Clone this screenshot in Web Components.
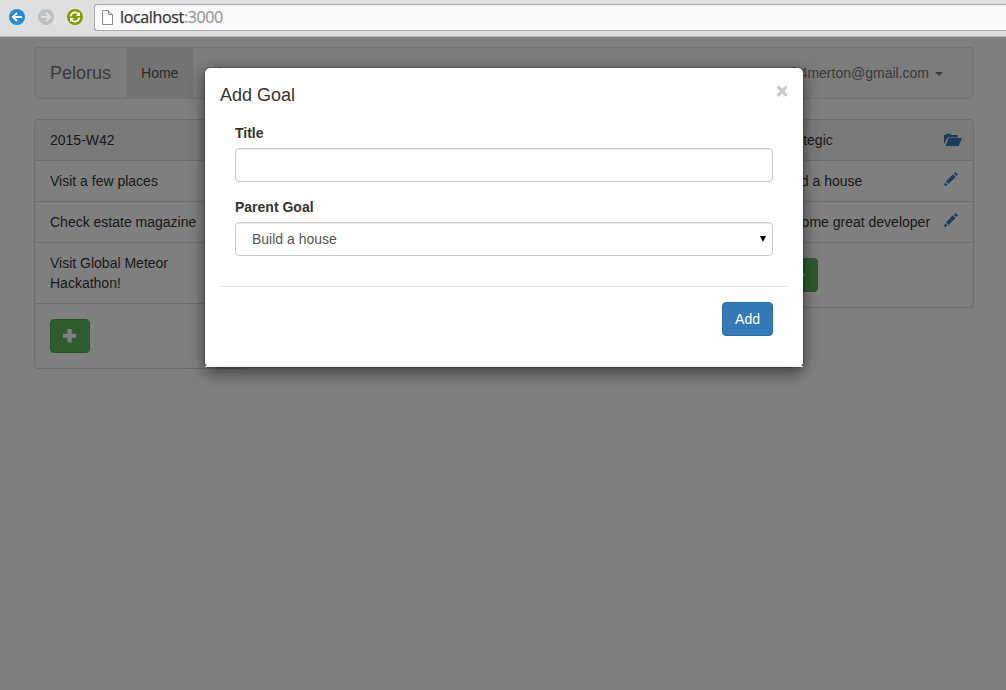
<!DOCTYPE html>
<html lang="en">
<head>
<meta charset="utf-8">
<title>Pelorus</title>
<style>
    html, body { margin: 0; height: 100%; overflow: hidden; background: #fff; }
    body {
        font: 14px/20px "Liberation Sans", Arial, sans-serif;
        color: #333;
    }
</style>
</head>
<body>
<pelorus-app></pelorus-app>

<script>
class GlyphIcon extends HTMLElement {
    constructor() {
        super();
        this.attachShadow({ mode: 'open' });
    }

    _getShape() {
        switch (this.getAttribute('name')) {
            case 'plus':
                return '<path d="M4.8 0h3.6q.4 0 .4.4V4.7h4q.4 0 .4.4v3.3q0 .4-.4.4h-4v4.2q0 .4-.4.4H4.8q-.4 0-.4-.4V8.8h-4Q0 8.800 0 8.400V5.100q0-.4.4-.4h4V.4q0-.4.4-.4z"/>';
            case 'pencil':
                return '<path d="M0 14l1.100-3.700 2.600 2.600zM1.900 9.500l7.200-7.200 2.600 2.600-7.200 7.200zM10 1.400l.9-.9q.6-.6 1.200 0l1.400 1.400q.6.6 0 1.200l-.9.9z"/>';
            case 'folder':
                return '<path d="M0 11.5V2h1.5l.7-1.2h4.6L7.500 2h6.300v2.400H4.400q-1 0-1.400.9zM1.600 13L4.200 5.700q.2-.6.9-.6H18l-3 7.400q-.2.5-.8.5z"/>';
        }
        return '';
    }

    connectedCallback() {
        const width = this.getAttribute('width') || 14;
        this.shadowRoot.innerHTML = `
            <style>
                :host { display: inline-block; width: ${width}px; height: 14px; line-height: 0; }
                svg { fill: currentColor; }
            </style>
            <svg width="${width}" height="14" viewBox="0 0 ${width} 14">${this._getShape()}</svg>
        `;
    }
}

class BrowserBar extends HTMLElement {
    constructor() {
        super();
        this.attachShadow({ mode: 'open' });
    }

    connectedCallback() {
        this.shadowRoot.innerHTML = `
            <style>
                :host {
                    display: flex;
                    box-sizing: border-box;
                    height: 37px;
                    padding: 4px 0 6px 9px;
                    background: #dfdfdf;
                    border-bottom: 1px solid #b3b3b3;
                    overflow: hidden;
                }
                .buttons { display: flex; gap: 13px; padding-top: 5px; width: 85px; flex: none; }
                .buttons svg { width: 16px; height: 16px; flex: none; }
                .address {
                    flex: 1;
                    display: flex;
                    box-sizing: border-box;
                    height: 27px;
                    padding: 5px 0 0 7px;
                    background: linear-gradient(#f2f2f2, #fafafa 4px);
                    border: 1px solid #aaa;
                    border-right: 0;
                    border-radius: 3px 0 0 3px;
                }
                .address svg { flex: none; margin-right: 6px; }
                .url {
                    margin-top: -3px;
                    font: 16px/20px "Open Sans", sans-serif;
                    letter-spacing: -0.35px;
                    -webkit-text-stroke: 0.25px;
                    color: #333;
                }
                .url span { color: #999; }
            </style>
            <div class="buttons">
                <svg viewBox="0 0 16 16">
                    <circle cx="8" cy="8" r="8" fill="#268bd2"/>
                    <path d="M13 8H4.5M8 4L4 8l4 4" fill="none" stroke="#fff" stroke-width="2"/>
                </svg>
                <svg viewBox="0 0 16 16">
                    <circle cx="8" cy="8" r="8" fill="#bdbfc0"/>
                    <path d="M3 8h8.5M8 4l4 4-4 4" fill="none" stroke="#e0e0e0" stroke-width="2"/>
                </svg>
                <svg viewBox="0 0 16 16">
                    <circle cx="8" cy="8" r="8" fill="#859900"/>
                    <path d="M3.7 7.3A4.4 4.4 0 0 1 11.4 5M12.3 8.7A4.4 4.4 0 0 1 4.6 11" fill="none" stroke="#fff" stroke-width="1.8"/>
                    <path d="M13 3v4H9zM3 13V9h4z" fill="#fff"/>
                </svg>
            </div>
            <div class="address">
                <svg width="12" height="16" viewBox="0 0 12 16">
                    <path d="M.5.5h6l4 4v10H.5z" fill="#fdfdfd" stroke="#8b8b8b"/>
                    <path d="M6.5.5v4h4" fill="#ddd" stroke="#8b8b8b"/>
                </svg>
                <div class="url">localhost<span>:3000</span></div>
            </div>
        `;
    }
}

class NavBar extends HTMLElement {
    constructor() {
        super();
        this.attachShadow({ mode: 'open' });
    }

    connectedCallback() {
        this.shadowRoot.innerHTML = `
            <style>
                :host {
                    display: flex;
                    height: 50px;
                    margin-bottom: 20px;
                    border: 1px solid #e7e7e7;
                    border-radius: 4px;
                    background: #f8f8f8;
                    color: #777;
                }
                .brand { padding: 15px; font-size: 18px; }
                .link { padding: 15px; }
                .active { background: #e7e7e7; color: #555; }
                .user {
                    display: flex;
                    align-items: center;
                    gap: 6px;
                    margin-left: auto;
                    padding-right: 30px;
                }
                .caret {
                    margin-top: 1px;
                    border-top: 4px solid;
                    border-left: 4px solid transparent;
                    border-right: 4px solid transparent;
                }
            </style>
            <div class="brand">Pelorus</div>
            <div class="link active">Home</div>
            <div class="link">About</div>
            <div class="user">k4merton@gmail.com <span class="caret"></span></div>
        `;
    }
}

class GoalPanel extends HTMLElement {
    constructor() {
        super();
        this.attachShadow({ mode: 'open' });
    }

    connectedCallback() {
        this.shadowRoot.innerHTML = `
            <style>
                :host {
                    display: block;
                    border: 1px solid #ddd;
                    border-radius: 4px;
                    background: #fff;
                }
                .heading {
                    display: flex;
                    padding: 10px 15px;
                    background: #f5f5f5;
                    border-radius: 3px 3px 0 0;
                }
                .folder { margin: 3px -4px 0 auto; color: #337ab7; }
                .footer { padding: 15px; border-top: 1px solid #ddd; }
                .add {
                    box-sizing: border-box;
                    width: 40px;
                    height: 34px;
                    padding: 9px 12px;
                    border: 1px solid #4cae4c;
                    border-radius: 4px;
                    background: #5cb85c;
                    color: #fff;
                    line-height: 0;
                }
            </style>
            <div class="heading">
                ${this.getAttribute('heading')}
                ${this.hasAttribute('folder') ? '<glyph-icon class="folder" name="folder" width="18"></glyph-icon>' : ''}
            </div>
            <slot></slot>
            <div class="footer"><div class="add"><glyph-icon name="plus"></glyph-icon></div></div>
        `;
    }
}

class GoalItem extends HTMLElement {
    constructor() {
        super();
        this.attachShadow({ mode: 'open' });
    }

    connectedCallback() {
        this.shadowRoot.innerHTML = `
            <style>
                :host {
                    display: flex;
                    justify-content: space-between;
                    padding: 10px 15px;
                    border-top: 1px solid #ddd;
                }
                .edit { flex: none; margin-top: 1px; color: #337ab7; }
            </style>
            <span><slot></slot></span>
            ${this.hasAttribute('editable') ? '<glyph-icon class="edit" name="pencil"></glyph-icon>' : ''}
        `;
    }
}

class GoalModal extends HTMLElement {
    constructor() {
        super();
        this.attachShadow({ mode: 'open' });
    }

    connectedCallback() {
        this.shadowRoot.innerHTML = `
            <style>
                :host {
                    display: block;
                    box-sizing: border-box;
                    width: 600px;
                    height: 301px;
                    border: 1px solid rgba(0, 0, 0, 0.2);
                    border-radius: 6px;
                    background: #fff;
                    background-clip: padding-box;
                    box-shadow: 0 5px 15px rgba(0, 0, 0, 0.5);
                }
                :host::after {
                    content: "";
                    position: absolute;
                    left: 0;
                    right: 0;
                    bottom: 0;
                    height: 1px;
                    background: #ececec;
                }
                header {
                    display: flex;
                    justify-content: space-between;
                    height: 21px;
                    padding: 15px 15px 0;
                }
                h4 { margin: 2px 0 0; font-size: 18px; font-weight: 500; line-height: 20px; }
                .close {
                    margin-top: -2px;
                    font-size: 20px;
                    font-weight: bold;
                    line-height: 20px;
                    -webkit-text-stroke: 0.8px;
                    color: #000;
                    opacity: 0.2;
                }
                form { padding: 19px 30px 0; }
                label { display: block; margin-bottom: 5px; font-weight: bold; }
                .control {
                    display: flex;
                    align-items: center;
                    justify-content: space-between;
                    box-sizing: border-box;
                    height: 34px;
                    margin-bottom: 15px;
                    padding: 0 6px 0 16px;
                    border: 1px solid #ccc;
                    border-radius: 4px;
                    box-shadow: inset 0 1px 1px rgba(0, 0, 0, 0.075);
                    color: #555;
                }
                footer {
                    display: flex;
                    justify-content: flex-end;
                    margin: 30px 15px 0;
                    padding: 15px 15px 0;
                    border-top: 1px solid #e5e5e5;
                }
                .submit {
                    padding: 6px 12px;
                    border: 1px solid #2e6da4;
                    border-radius: 4px;
                    background: #337ab7;
                    color: #fff;
                }
            </style>
            <header><h4>Add Goal</h4><div class="close">×</div></header>
            <form>
                <label>Title</label>
                <div class="control"></div>
                <label>Parent Goal</label>
                <div class="control">
                    Build a house
                    <svg width="6" height="6" viewBox="0 0 6 6"><path d="M0 0h6L3 6z"/></svg>
                </div>
            </form>
            <footer><div class="submit">Add</div></footer>
        `;
    }
}

class PelorusApp extends HTMLElement {
    constructor() {
        super();
        this.attachShadow({ mode: 'open' });
    }

    connectedCallback() {
        this.shadowRoot.innerHTML = `
            <style>
                :host { display: flex; flex-direction: column; height: 100%; }
                main { position: relative; flex: 1; overflow: hidden; }
                .container { width: 940px; padding: 10px 0 0 34px; }
                .row {
                    display: grid;
                    grid-template-columns: repeat(4, 212.5px);
                    gap: 30px;
                    align-items: start;
                }
                .strategic { grid-column: 4; }
                .backdrop { position: absolute; inset: 0; background: rgba(0, 0, 0, 0.5); }
                goal-modal { position: absolute; left: 204px; top: 30px; }
            </style>
            <browser-bar></browser-bar>
            <main>
                <div class="container">
                    <nav-bar></nav-bar>
                    <div class="row">
                        <goal-panel heading="2015-W42">
                            <goal-item>Visit a few places</goal-item>
                            <goal-item>Check estate magazine</goal-item>
                            <goal-item>Visit Global Meteor Hackathon!</goal-item>
                        </goal-panel>
                        <goal-panel class="strategic" heading="Strategic" folder>
                            <goal-item editable>Build a house</goal-item>
                            <goal-item editable>Become great developer</goal-item>
                        </goal-panel>
                    </div>
                </div>
                <div class="backdrop"></div>
                <goal-modal></goal-modal>
            </main>
        `;
    }
}

customElements.define('glyph-icon', GlyphIcon);
customElements.define('browser-bar', BrowserBar);
customElements.define('nav-bar', NavBar);
customElements.define('goal-panel', GoalPanel);
customElements.define('goal-item', GoalItem);
customElements.define('goal-modal', GoalModal);
customElements.define('pelorus-app', PelorusApp);
</script>
</body>
</html>
